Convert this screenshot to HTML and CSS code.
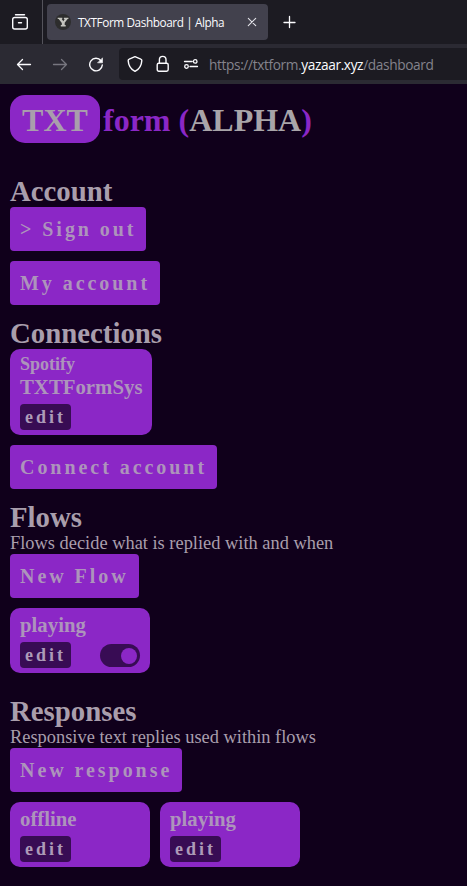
FILE: index.html
```html
<!DOCTYPE html>
<html lang="en">
<head>
<meta charset="utf-8">
<title>TXTForm Dashboard | Alpha</title>
<link rel="stylesheet" href="styles.css">
</head>
<body>
<header class="browser">
  <div class="tabs">
    <div class="view">
      <svg width="18" height="18" viewBox="0 0 18 18" fill="none" stroke="#fbfbfe" stroke-width="1.4" stroke-linecap="round"><path d="M4.500 1.800h9"/><path d="M1.700 7v7a2 2 0 0 0 2 2h10.600a2 2 0 0 0 2-2V6.500a2 2 0 0 0-2-2H3.700a2 2 0 0 0-2 2zM7.500 9.700h3"/></svg>
    </div>
    <div class="tab">
      <svg class="favicon" width="16" height="16" viewBox="0 0 16 16"><circle cx="8" cy="8" r="8" fill="#2d2d2d"/><path d="M2.700 3.800h4.600v1.300h-.6L8.300 7.200 9.700 5.100h-.8V3.800h4.500v1.300h-.8L9.700 8.800v2.200h1v1.400H5.800V11h1V8.900L3.700 5.100h-1z" fill="#c4c4be"/></svg>
      <span class="tab-title">TXTForm Dashboard | Alpha</span>
      <svg class="close" width="10" height="10" viewBox="0 0 10 10" stroke="#e4e4ea" stroke-width="1.1" stroke-linecap="round"><path d="M1.300 1.300l7.400 7.400M8.700 1.300L1.300 8.700"/></svg>
    </div>
    <svg class="plus" width="14" height="14" viewBox="0 0 14 14" stroke="#fbfbfe" stroke-width="1.300" stroke-linecap="round"><path d="M7.500 1.500v11M2 7.500h11"/></svg>
  </div>
  <div class="toolbar">
    <svg class="nav" width="16" height="16" viewBox="0 0 16 16" fill="none" stroke="#fbfbfe" stroke-width="1.300" stroke-linecap="round" stroke-linejoin="round"><path d="M14.500 8.500H1.500M6.500 3.500l-5 5 5 5"/></svg>
    <svg class="nav" width="16" height="16" viewBox="0 0 16 16" fill="none" stroke="#77767f" stroke-width="1.300" stroke-linecap="round" stroke-linejoin="round"><path d="M1.500 8.500h13M9.500 3.500l5 5-5 5"/></svg>
    <svg class="nav" width="16" height="16" viewBox="0 0 16 16" fill="none" stroke="#fbfbfe" stroke-width="1.400" stroke-linecap="round"><path d="M13 4.700A6.300 6.300 0 1 0 14.300 9"/><path d="M14.500 2.200v4.600H9.900z" fill="#fbfbfe" stroke-width=".6"/></svg>
    <div class="url">
      <svg width="16" height="18" viewBox="0 0 16 18" fill="none" stroke="#fbfbfe" stroke-width="1.400" stroke-linejoin="round"><path d="M8 1.600l5.800 2.500q1 .4 1 1.500C14.600 10.500 12.500 14 8 16.400 3.500 14 1.400 10.500 1.200 5.600q0-1.100 1-1.500z"/></svg>
      <svg width="14" height="18" viewBox="0 0 14 18" fill="none" stroke="#fbfbfe" stroke-width="1.400"><rect x="1.200" y="8.200" width="11" height="8" rx="1.600"/><path d="M3.400 8V4.700a3.300 3.300 0 0 1 6.600 0V8"/></svg>
      <svg width="16" height="12" viewBox="0 0 16 12" fill="none" stroke="#fbfbfe" stroke-width="1.300" stroke-linecap="round"><path d="M1.500 3.500h7.700M7 8.500h7.500"/><circle cx="12.200" cy="3.400" r="1.800"/><circle cx="3.500" cy="8.500" r="1.800"/></svg>
      <span class="address">https://txtform.<b>yazaar.xyz</b>/dashboard</span>
    </div>
  </div>
</header>
<main>
  <h1><span class="badge">TXT</span><span class="form">form (<span class="alpha">ALPHA</span>)</span></h1>
  <section class="account">
    <h2>Account</h2>
    <button class="btn">&gt; Sign out</button>
    <button class="btn">My account</button>
  </section>
  <section>
    <h2>Connections</h2>
    <article class="card connection">
      <h4>Spotify</h4>
      <h3>TXTFormSys</h3>
      <button class="edit">edit</button>
    </article>
    <button class="btn">Connect account</button>
  </section>
  <section class="flows">
    <h2>Flows</h2>
    <p>Flows decide what is replied with and when</p>
    <button class="btn">New Flow</button>
    <article class="card">
      <h3>playing</h3>
      <div class="actions"><button class="edit">edit</button><span class="toggle"><i></i></span></div>
    </article>
  </section>
  <section>
    <h2>Responses</h2>
    <p>Responsive text replies used within flows</p>
    <button class="btn">New response</button>
    <div class="cards">
      <article class="card"><h3>offline</h3><button class="edit">edit</button></article>
      <article class="card"><h3>playing</h3><button class="edit">edit</button></article>
    </div>
  </section>
</main>
</body>
</html>
```
FILE: styles.css
```css
* { box-sizing: border-box; margin: 0; padding: 0; }
body { width: 467px; height: 886px; overflow: hidden; background: #10001b; color: #a99eac; font-family: "Liberation Serif", serif; }
svg { display: block; flex: none; }
.browser { height: 84px; background: #2b2a33; font-family: "Noto Sans", sans-serif; }
.tabs { height: 44px; display: flex; align-items: center; background: #1c1b22; }
.view { width: 43px; height: 44px; padding: 13px 0 0 11px; border-right: 1px solid #54535b; }
.tab { width: 221px; height: 36px; margin-left: 4px; padding: 0 11px 0 8px; display: flex; align-items: center; background: #42414d; border-radius: 4px; }
.tab-title { margin-left: 7px; color: #fbfbfe; font: 11.8px "Open Sans", sans-serif; letter-spacing: -.42px; white-space: nowrap; }
.close { margin-left: auto; }
.plus { margin-left: 14px; }
.toolbar { height: 40px; display: flex; align-items: center; padding-left: 16px; }
.nav { margin-right: 20px; }
.url { flex: 1; height: 32px; margin-left: -5px; padding-left: 8px; display: flex; align-items: center; background: #1c1b22; border-radius: 4px 0 0 4px; }
.url svg { margin-right: 13px; }
.url svg:nth-of-type(3) { margin-right: 10px; }
.address { color: #84838c; font: 13.7px "Open Sans", sans-serif; letter-spacing: -.38px; white-space: nowrap; }
.address b { color: #fbfbfe; font-weight: 400; }
main { padding: 11px 10px 0; }
h1 { height: 48px; margin-bottom: 31px; display: flex; align-items: center; font-size: 32px; line-height: 50px; }
.badge { width: 90px; height: 48px; margin-right: 3px; text-align: center; background: #8b27c6; border-radius: 15px; }
.form { height: 48px; color: #8b27c6; white-space: nowrap; }
.alpha { color: #a9a5a9; }
section { display: flex; flex-direction: column; align-items: flex-start; margin-bottom: 11px; }
h2 { height: 33px; font-size: 28.8px; line-height: 35px; }
p { height: 21px; font-size: 18.400px; line-height: 21px; white-space: nowrap; }
button { border: 0; font-family: inherit; font-weight: 700; letter-spacing: 3px; white-space: nowrap; }
.btn { height: 44px; padding: 0 10px; color: #ad94bb; background: #8b27c6; border-radius: 4px; font-size: 20px; line-height: 44px; letter-spacing: 2.95px; }
.btn + .btn, .card + .btn, .btn + .card, .cards { margin-top: 10px; }
.card { width: 140px; height: 65px; padding: 5px 10px; color: #ad94bb; background: #8b27c6; border-radius: 10px; }
.connection { width: 142px; height: 86px; }
h3 { height: 24px; margin-bottom: 5px; font-size: 20.8px; line-height: 24px; }
h4 { height: 21px; font-size: 18px; line-height: 21px; }
.edit { display: block; height: 26px; padding: 0 5px; color: #ad9bb8; background: #380c54; border-radius: 4px; font-size: 18px; line-height: 26px; }
.actions { display: flex; justify-content: space-between; align-items: center; }
.toggle { width: 40px; height: 23px; padding: 4px 3px; display: flex; justify-content: flex-end; background: #380c54; border-radius: 12px; }
.toggle i { width: 16px; height: 16px; background: #8b27c6; border-radius: 50%; }
.flows { margin-bottom: 21px; }
.cards { display: flex; gap: 10px; }
```
